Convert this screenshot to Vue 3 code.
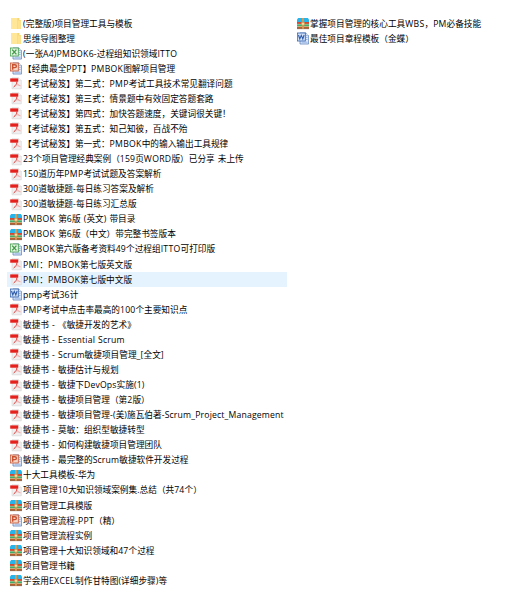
<template>
  <div class="file-list">
    <ul v-for="(column, index) in columns" :key="index" class="column">
      <li
        v-for="file in column"
        :key="file.name"
        class="file"
        :class="{ hovered: file.hovered }"
      >
        <svg v-if="file.type === 'folder'" class="icon" viewBox="0 0 12 13">
          <path d="M1.4 1h8v2H11v9H1.4z" fill="#f6d778" />
          <path d="M1.4 1h6v11h-6z" fill="#ffe699" />
          <path d="M8 3.5h2.8V12H8z" fill="#ffe28e" />
        </svg>
        <svg v-else-if="file.type === 'pdf'" class="icon" viewBox="0 0 12 13">
          <path d="M2 .8h6.6l2.7 2.7v8.3H2z" fill="#f1efef" stroke="#cfcccc" stroke-width=".5" />
          <path d="M8.6.8v2.7h2.7" fill="#fff" stroke="#cfcccc" stroke-width=".4" />
          <path d="M.2 1.4h8v3.3h-8z" fill="#e6201c" />
          <path
            d="M6.9 4.6C6.8 7 5.6 8.6 3.6 10"
            fill="none"
            stroke="#e3322e"
            stroke-width="1"
          />
          <path
            d="M7 5.6c.5 1.9 1.5 3 3.6 3.3M5 8.4c1.7-.6 3.5-.6 5.3.1"
            fill="none"
            stroke="#f09a98"
            stroke-width=".6"
          />
        </svg>
        <svg v-else-if="file.type === 'zip'" class="icon" viewBox="0 0 12 13">
          <path d="M1.2 1h9.6L12 2.6V5H0V2.6z" fill="#27b4ea" />
          <path d="M0 5h12v2.2H0z" fill="#cf4a35" />
          <path d="M0 7.2h12v2.3H0z" fill="#3fae68" />
          <path d="M0 9.5h12v2.3H0z" fill="#b9602f" />
          <path d="M0 7.2h12M0 9.5h12" stroke="#e9d9b0" stroke-width=".35" />
          <path d="M0 11.7h12" stroke="#6b4a30" stroke-width=".5" />
          <path d="M5 1h2v10.8H5z" fill="#cf9d58" />
          <path d="M4.4 5.4h3.2v2.8H4.4z" fill="#f6dc94" stroke="#a97c40" stroke-width=".4" />
        </svg>
        <svg v-else class="icon" :class="file.type" viewBox="0 0 12 13">
          <path d="M3 1h6l2.6 2.6V12H3z" fill="#dfeafb" stroke="#5f86bd" stroke-width=".8" />
          <path d="M9 1v2.6h2.6" fill="#fff" stroke="#5f86bd" stroke-width=".5" />
          <path d="M8.8 5.5h1.8M8.8 7.5h1.8M4.6 10.2h6" stroke="#8db0e2" stroke-width=".9" />
          <rect class="badge" x=".3" y="1" width="8" height="8" />
          <path class="mark" :d="marks[file.type]" />
        </svg>
        <span class="name"><span
          v-for="(run, i) in splitRuns(file.name)"
          :key="i"
          :class="runClass(run)"
        >{{ run }}</span></span>
      </li>
    </ul>
  </div>
</template>

<script setup>
const marks = {
  excel: 'M2.2 2.6l4.2 4.8M6.4 2.6L2.2 7.4',
  word: 'M1.5 3l1.3 4 1.5-3.6L5.8 7l1.3-4',
  ppt: 'M2.7 7.8V2.8h2.2q1.5 0 1.5 1.4T4.9 5.6H2.7',
}

const splitRuns = (name) => name.match(/[A-Z]{3,}|(?:(?![A-Z]{3})[\x20-\x7e])+|[^\x20-\x7e]+/g)

const runClass = (run) => {
  if (/^[A-Z]{3,}$/.test(run)) return 'caps'
  return /^[\x20-\x7e]/.test(run) ? 'latin' : 'cjk'
}

const columns = [
  [
    { type: 'folder', name: '(完整版)项目管理工具与模板' },
    { type: 'folder', name: '思维导图整理' },
    { type: 'excel', name: '(一张A4)PMBOK6-过程组知识领域ITTO' },
    { type: 'ppt', name: '【经典最全PPT】PMBOK图解项目管理' },
    { type: 'pdf', name: '【考试秘笈】第二式：PMP考试工具技术常见翻译问题' },
    { type: 'pdf', name: '【考试秘笈】第三式：情景题中有效固定答题套路' },
    { type: 'pdf', name: '【考试秘笈】第四式：加快答题速度，关键词很关键！' },
    { type: 'pdf', name: '【考试秘笈】第五式：知己知彼，百战不殆' },
    { type: 'pdf', name: '【考试秘笈】第一式：PMBOK中的输入输出工具规律' },
    { type: 'pdf', name: '23个项目管理经典案例（159页WORD版）已分享 未上传' },
    { type: 'pdf', name: '150道历年PMP考试试题及答案解析' },
    { type: 'pdf', name: '300道敏捷题-每日练习答案及解析' },
    { type: 'pdf', name: '300道敏捷题-每日练习汇总版' },
    { type: 'zip', name: 'PMBOK 第6版 (英文) 带目录' },
    { type: 'zip', name: 'PMBOK 第6版（中文）带完整书签版本' },
    { type: 'excel', name: 'PMBOK第六版备考资料49个过程组ITTO可打印版' },
    { type: 'pdf', name: 'PMI：PMBOK第七版英文版' },
    { type: 'pdf', name: 'PMI：PMBOK第七版中文版', hovered: true },
    { type: 'word', name: 'pmp考试36计' },
    { type: 'pdf', name: 'PMP考试中点击率最高的100个主要知识点' },
    { type: 'pdf', name: '敏捷书 - 《敏捷开发的艺术》' },
    { type: 'pdf', name: '敏捷书 - Essential Scrum' },
    { type: 'pdf', name: '敏捷书 - Scrum敏捷项目管理_[全文]' },
    { type: 'pdf', name: '敏捷书 - 敏捷估计与规划' },
    { type: 'pdf', name: '敏捷书 - 敏捷下DevOps实施(1)' },
    { type: 'pdf', name: '敏捷书 - 敏捷项目管理（第2版）' },
    { type: 'pdf', name: '敏捷书 - 敏捷项目管理-(美)施瓦伯著-Scrum_Project_Management' },
    { type: 'pdf', name: '敏捷书 - 莫敏：组织型敏捷转型' },
    { type: 'pdf', name: '敏捷书 - 如何构建敏捷项目管理团队' },
    { type: 'ppt', name: '敏捷书 - 最完整的Scrum敏捷软件开发过程' },
    { type: 'zip', name: '十大工具模板-华为' },
    { type: 'pdf', name: '项目管理10大知识领域案例集.总结（共74个）' },
    { type: 'zip', name: '项目管理工具模版' },
    { type: 'ppt', name: '项目管理流程-PPT（精）' },
    { type: 'zip', name: '项目管理流程实例' },
    { type: 'zip', name: '项目管理十大知识领域和47个过程' },
    { type: 'zip', name: '项目管理书籍' },
    { type: 'zip', name: '学会用EXCEL制作甘特图(详细步骤)等' },
  ],
  [
    { type: 'zip', name: '掌握项目管理的核心工具WBS，PM必备技能' },
    { type: 'word', name: '最佳项目章程模板（金蝶）' },
  ],
]
</script>

<style>
body {
  margin: 0;
  background: #fff;
}
</style>

<style scoped>
.file-list {
  box-sizing: border-box;
  width: 522px;
  height: 611px;
  padding: 16px 0 0 7px;
  display: grid;
  grid-template-columns: 280px 220px;
  column-gap: 7px;
  align-items: start;
  font-family: "Open Sans", "Noto Sans CJK SC", sans-serif;
  font-size: 8.67px;
  color: #000;
  overflow: hidden;
}

.column {
  list-style: none;
  margin: 0;
  padding: 0;
}

.file {
  height: 15.07px;
  padding-left: 3px;
  display: flex;
  align-items: center;
  gap: 1px;
  line-height: 15px;
  white-space: nowrap;
}

.file.hovered {
  background: #e5f3ff;
}

.icon {
  width: 12px;
  height: 13px;
  flex: none;
}

.name {
  padding-top: 1px;
  white-space: pre;
}

.latin {
  letter-spacing: 0.17px;
  word-spacing: 0.6px;
}

.caps {
  letter-spacing: 0.3px;
}

.badge {
  fill: #e6f5e4;
  stroke-width: 0.8;
}

.mark {
  fill: none;
  stroke-width: 1.4;
}

.excel .badge,
.excel .mark {
  stroke: #3f9b46;
}

.word .badge {
  fill: #d3e3f9;
}

.word .badge,
.word .mark {
  stroke: #315eaa;
}

.word .mark {
  stroke-width: 1.1;
}

.ppt .badge {
  fill: #f7d5c4;
}

.ppt .badge,
.ppt .mark {
  stroke: #c8512f;
}
</style>
